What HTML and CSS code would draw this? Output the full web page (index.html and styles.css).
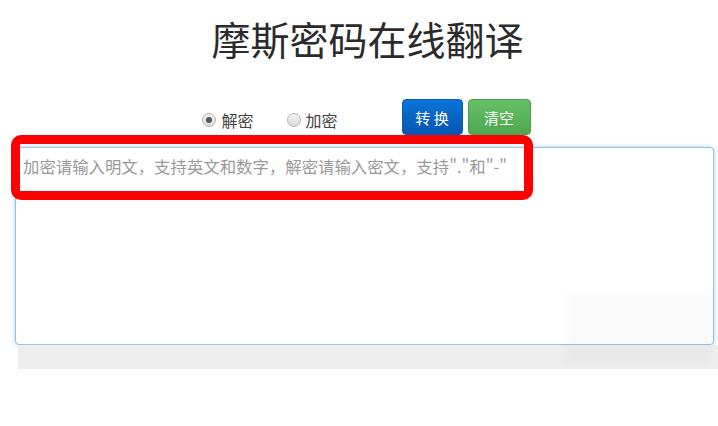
FILE: index.html
```html
<!DOCTYPE html>
<html lang="zh-CN">

<head>
    <meta charset="UTF-8">
    <meta name="viewport" content="width=device-width, initial-scale=1.0">
    <title>摩斯密码在线翻译</title>
    <link rel="stylesheet" href="styles.css">
</head>

<body>
    <div class="page">
        <h1 class="title">摩斯密码在线翻译</h1>

        <div class="toolbar">
            <label class="opt"><span class="radio checked"></span>解密</label>
            <label class="opt"><span class="radio"></span>加密</label>
            <div class="btns">
                <button class="btn btn-blue">转 换</button>
                <button class="btn btn-green">清空</button>
            </div>
        </div>

        <textarea class="input" placeholder='加密请输入明文，支持英文和数字，解密请输入密文，支持"."和"-"'></textarea>
        <div class="strip"></div>
    </div>

    <!-- annotation box drawn over the textarea -->
    <div class="mark"></div>
    <div class="smudge"></div>
</body>

</html>
```

FILE: styles.css
```css
body {
    margin: 0;
    font-family: 'Noto Sans CJK SC', 'Liberation Sans', sans-serif;
    background: #fff;
    color: #333;
}

.page {
    width: 699px;
    margin-left: 15px;
    padding-top: 15px;
}

.title {
    margin: 0;
    font-size: 39px;
    font-weight: normal;
    line-height: 46px;
    text-align: center;
    color: #2b2b2b;
    padding-left: 6px;
}

.toolbar {
    display: flex;
    align-items: center;
    justify-content: center;
    margin-top: 38px;
    height: 36px;
    padding-left: 4px;
}

.opt {
    display: flex;
    align-items: center;
    font-size: 16px;
    color: #444;
    margin-right: 33px;
    padding-top: 6px;
}

.opt+.opt {
    margin-right: 64px;
}

.radio {
    width: 12px;
    height: 12px;
    border: 1px solid #b5b5b5;
    border-radius: 50%;
    background: linear-gradient(#f4f4f4, #d9d9d9);
    margin-right: 5px;
    position: relative;
}

.radio.checked::after {
    content: "";
    position: absolute;
    left: 3px;
    top: 3px;
    width: 6px;
    height: 6px;
    border-radius: 50%;
    background: #555;
}

.btns {
    display: flex;
    gap: 5px;
}

.btn {
    width: 61px;
    height: 36px;
    border: 1px solid transparent;
    border-radius: 4px;
    color: #fff;
    font-family: inherit;
    font-size: 15px;
    cursor: pointer;
}

.btn-blue {
    background: linear-gradient(#0a74d8, #0656b0);
    border-color: #0a5cb4;
}

.btn-green {
    background: linear-gradient(#66c166, #4ea74e);
    border-color: #4a9f4a;
    width: 63px;
}

.input {
    display: block;
    box-sizing: border-box;
    width: 699px;
    height: 198px;
    margin-top: 12px;
    padding: 6px 7px;
    border: 1px solid #94c3ec;
    border-radius: 4px;
    box-shadow: 0 0 4px rgba(82, 168, 236, 0.55);
    font-family: inherit;
    font-size: 16.4px;
    line-height: 24px;
    resize: none;
    outline: none;
}

.input::placeholder {
    color: #9a9a9a;
}

.strip {
    height: 24px;
    margin-left: 3px;
    width: 700px;
    background: #eeeeee;
}

.mark {
    position: absolute;
    left: 11px;
    top: 135px;
    width: 504px;
    height: 47px;
    border: 9px solid #ff0000;
    border-radius: 10px;
}

.smudge {
    position: absolute;
    left: 566px;
    top: 292px;
    width: 146px;
    height: 72px;
    background: rgba(0, 0, 0, 0.018);
    filter: blur(3px);
}
```
